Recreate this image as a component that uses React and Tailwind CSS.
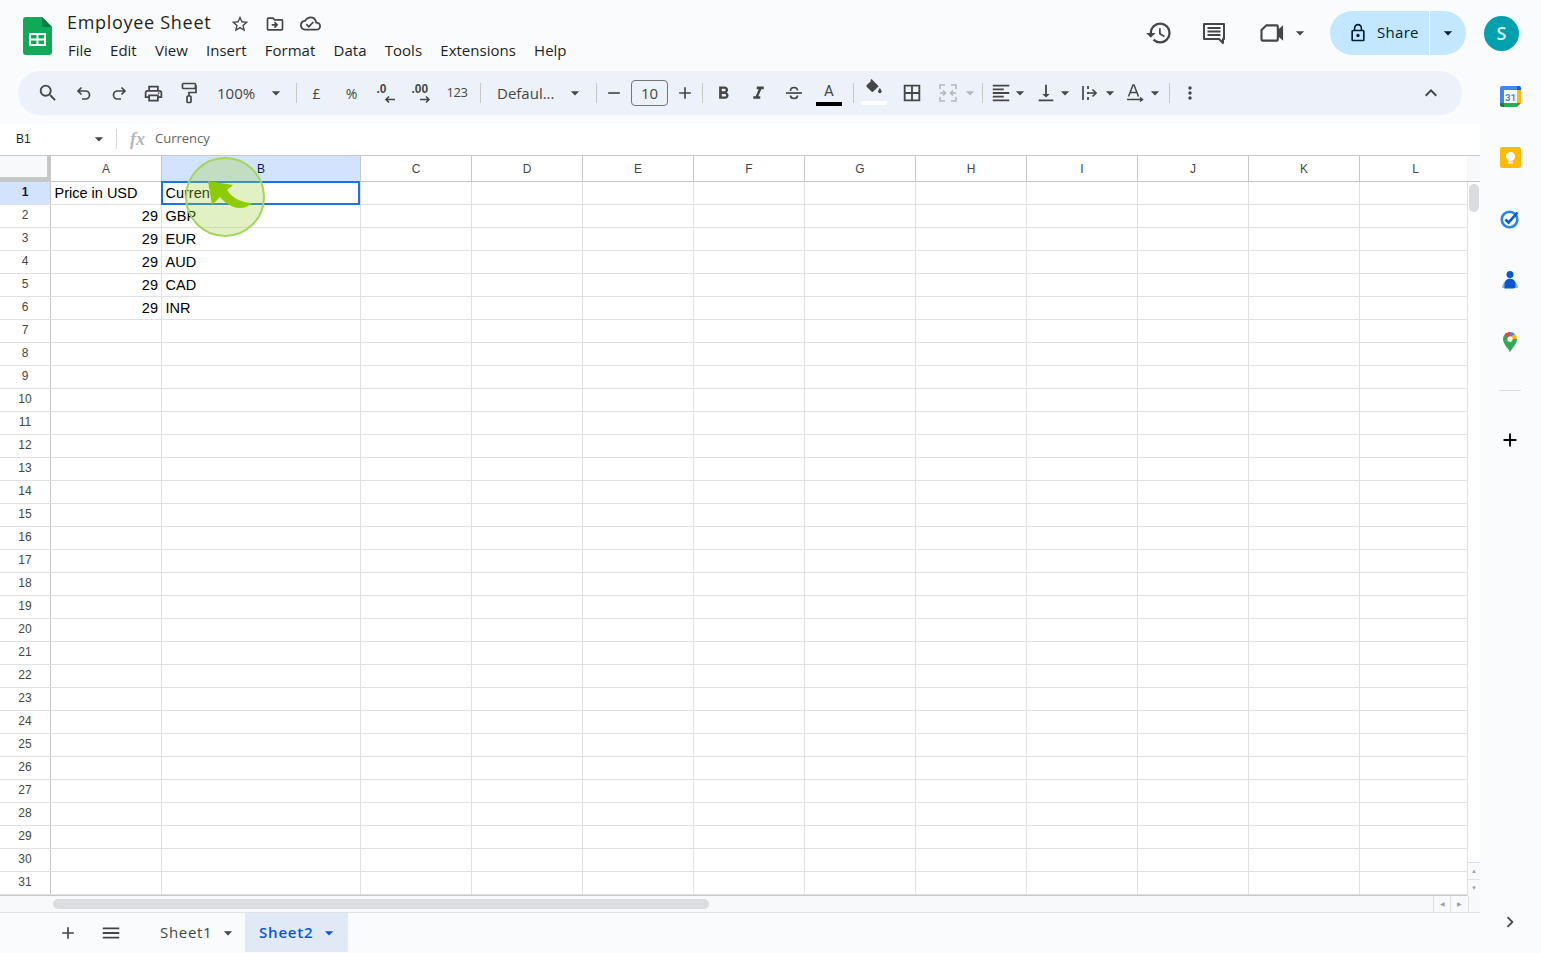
import React from 'react';
import {
  MdSearch, MdArrowDropDown, MdRemove, MdAdd,
  MdFormatBold, MdFormatItalic, MdBorderAll, MdFormatAlignLeft, MdVerticalAlignBottom,
  MdMoreVert, MdKeyboardArrowUp, MdOutlineStarBorder, MdOutlineDriveFileMove, MdOutlineCloudDone, MdHistory,
  MdLockOutline, MdMenu, MdChevronRight, MdOutlinePrint,
} from 'react-icons/md';

const columns = [
  { name: 'A', width: 'w-[111px]' },
  { name: 'B', width: 'w-[199px]' },
  { name: 'C', width: 'w-[111px]' },
  { name: 'D', width: 'w-[111px]' },
  { name: 'E', width: 'w-[111px]' },
  { name: 'F', width: 'w-[111px]' },
  { name: 'G', width: 'w-[111px]' },
  { name: 'H', width: 'w-[111px]' },
  { name: 'I', width: 'w-[111px]' },
  { name: 'J', width: 'w-[111px]' },
  { name: 'K', width: 'w-[111px]' },
  { name: 'L', width: 'w-[107px]' },
];

const rowData = {
  1: ['Price in USD', 'Curren'],
  2: ['29', 'GBP'],
  3: ['29', 'EUR'],
  4: ['29', 'AUD'],
  5: ['29', 'CAD'],
  6: ['29', 'INR'],
};

const rows = Array.from({ length: 31 }, (_, i) => i + 1);
const menus = ['File', 'Edit', 'View', 'Insert', 'Format', 'Data', 'Tools', 'Extensions', 'Help'];

const Divider = () => <div className="w-px h-5 bg-[#c7c7c7] shrink-0" />;
const Caret = ({ className = 'text-[#444746]' }) => <MdArrowDropDown className={`w-[20px] h-[20px] shrink-0 ${className}`} />;
const Slot = ({ className = 'w-[35px]', children }) => <div className={`flex items-center justify-center shrink-0 ${className}`}>{children}</div>;

const SheetsLogo = () => (
  <svg width="29" height="38" viewBox="0 0 29 38" className="shrink-0">
    <path d="M3 0h16l10 10v25a3 3 0 0 1-3 3H3a3 3 0 0 1-3-3V3a3 3 0 0 1 3-3z" fill="#0fa958" />
    <path d="M19 0l10 10h-8a2 2 0 0 1-2-2z" fill="#0a7a3f" />
    <path d="M6 16h17v13H6z M8 18v3.500h5.500V18z M15.500 18v3.500H21V18z M8 23.500V27h5.500v-3.500z M15.500 23.500V27H21v-3.500z" fill="#fff" fillRule="evenodd" />
  </svg>
);

const CommentIcon = () => (
  <svg width="24" height="24" viewBox="0 0 24 24" fill="none" stroke="#444746" strokeWidth="2">
    <path d="M2 3h20v15h-1v4l-4-4H2z" strokeLinejoin="round" />
    <path d="M5.500 7h13M5.500 10.500h13M5.500 14h13" strokeWidth="1.800" />
  </svg>
);

const VideoIcon = () => (
  <svg width="28" height="28" viewBox="0 0 24 24" fill="none" stroke="#444746" strokeWidth="1.800">
    <path d="M7 5.500h9a1 1 0 0 1 1 1v11a1 1 0 0 1-1 1H4a1 1 0 0 1-1-1V9.500z" strokeLinejoin="round" />
    <path d="M17 10l4-3.500v11L17 14z" fill="#444746" strokeWidth="1" />
  </svg>
);

const UndoIcon = () => (
  <svg width="20" height="20" viewBox="0 0 20 20" fill="none" stroke="#444746" strokeWidth="1.700">
    <path d="M7.500 4.500 4 8l3.500 3.500M4 8h7.500a4 4 0 0 1 0 8H8" />
  </svg>
);

const RedoIcon = () => (
  <svg width="20" height="20" viewBox="0 0 20 20" fill="none" stroke="#444746" strokeWidth="1.700">
    <path d="M12.500 4.500 16 8l-3.500 3.500M16 8H8.500a4 4 0 0 0 0 8H12" />
  </svg>
);

const PaintIcon = () => (
  <svg width="16" height="22" viewBox="0 0 16 22" fill="none" stroke="#444746" strokeWidth="1.700">
    <rect x="1.500" y="1.500" width="13" height="5" rx="1" />
    <path d="M14.500 4H15v6.500H8V14" />
    <rect x="6" y="14" width="4" height="6.500" rx="1" />
  </svg>
);

const StrikeIcon = () => (
  <svg width="20" height="20" viewBox="0 0 20 20" fill="none" stroke="#444746" strokeWidth="1.700">
    <path d="M2 10h16" />
    <path d="M6.500 8c0-2 1.500-3.500 3.500-3.500s3.500 1 3.500 3M13.500 12.500c0 2-1.500 3-3.500 3s-3.500-1-3.500-3" />
  </svg>
);

const DecimalLess = () => (
  <div className="relative w-[22px] h-[24px] text-[#444746] font-bold text-[12px] leading-none font-['Liberation_Sans',sans-serif]">
    <span className="absolute left-[1px] top-[2px]">.0</span>
    <svg className="absolute left-[8px] top-[14px]" width="12" height="9" viewBox="0 0 12 9" fill="none" stroke="#444746" strokeWidth="1.600"><path d="M11 4.500H2M5 1.500l-3 3 3 3" /></svg>
  </div>
);

const DecimalMore = () => (
  <div className="relative w-[22px] h-[24px] text-[#444746] font-bold text-[12px] leading-none font-['Liberation_Sans',sans-serif]">
    <span className="absolute left-[1px] top-[2px]">.00</span>
    <svg className="absolute left-[8px] top-[14px]" width="12" height="9" viewBox="0 0 12 9" fill="none" stroke="#444746" strokeWidth="1.600"><path d="M1 4.500h9M7 1.500l3 3-3 3" /></svg>
  </div>
);

const TextColor = () => (
  <div className="flex flex-col items-center w-[26px] h-[26px] mt-[1px]">
    <span className="text-[15px] leading-[20px] text-[#444746] font-['Roboto',sans-serif]">A</span>
    <div className="w-[26px] h-[4px] bg-black mt-[1px]" />
  </div>
);

const FillColor = () => (
  <div className="flex flex-col items-center w-[26px] h-[26px] -mt-[3px]">
    <svg width="18" height="18" viewBox="0 0 20 20" fill="#444746">
      <path d="M6 1l1.200-1 8 8-6 6a1.500 1.500 0 0 1-2 0L2 8.800a1.500 1.500 0 0 1 0-2L6.500 2.500z" />
      <path d="M16.500 10s2 2.500 2 3.800a2 2 0 0 1-4 0c0-1.300 2-3.800 2-3.800z" />
    </svg>
    <div className="w-[26px] h-[4px] bg-white mt-[4px]" />
  </div>
);

const MergeIcon = () => (
  <svg width="20" height="20" viewBox="0 0 20 20" fill="none" stroke="#b4b7bb" strokeWidth="1.600">
    <path d="M7 2H2v4M13 2h5v4M7 18H2v-4M13 18h5v-4M2 10h5M5 7.500 7.500 10 5 12.500M18 10h-5M15 7.500 12.500 10l2.500 2.500" />
  </svg>
);

const WrapIcon = () => (
  <svg width="20" height="20" viewBox="0 0 20 20" fill="none" stroke="#444746" strokeWidth="1.700">
    <path d="M3 3v14M8 3v3M8 9v2M8 14v3M7 10h9M12.500 6.500l3.500 3.500-3.500 3.500" />
  </svg>
);

const RotateIcon = () => (
  <svg width="22" height="22" viewBox="0 0 22 22" fill="none" stroke="#444746" strokeWidth="1.500">
    <path d="M3.500 14.500 8 3h1l4.500 11.500M5.200 10.500h6.600M2 17.500h15M15 15.500l2.500 2-2.500 2" />
  </svg>
);

const CalendarIcon = () => (
  <svg width="21" height="21" viewBox="0 0 21 21">
    <path d="M4 0h13v4H4z" fill="#4285f4" />
    <path d="M17 0h2a2 2 0 0 1 2 2v2h-4z" fill="#1a5fd0" />
    <path d="M17 4h4v13h-4z" fill="#fbbc04" />
    <path d="M4 17h13v4H4z" fill="#34a853" />
    <path d="M0 4h4v13H0z" fill="#4285f4" />
    <path d="M0 17h4v4H2a2 2 0 0 1-2-2z" fill="#188038" />
    <path d="M0 4V2a2 2 0 0 1 2-2h2v4z" fill="#4285f4" />
    <path d="M17 17h4l-4 4z" fill="#ea4335" />
    <path d="M4 4h13v13H4z" fill="#fff" />
    <text x="10.500" y="14.500" textAnchor="middle" fontSize="9.500" fontWeight="700" fill="#4285f4" fontFamily="Roboto, sans-serif">31</text>
  </svg>
);

const KeepIcon = () => (
  <svg width="21" height="22" viewBox="0 0 21 22">
    <rect width="21" height="21" rx="2" fill="#fbbc04" />
    <circle cx="10.500" cy="9.500" r="4.500" fill="#fff" />
    <rect x="8.300" y="14.500" width="4.400" height="2" fill="#fff" />
  </svg>
);

const TasksIcon = () => (
  <svg width="20" height="20" viewBox="0 0 20 20" fill="none">
    <circle cx="9.500" cy="10.500" r="7.800" stroke="#2684fc" strokeWidth="2.600" />
    <path d="M5.500 10.500l3 3 9-10" stroke="#0b57d0" strokeWidth="2.600" />
  </svg>
);

const ContactsIcon = () => (
  <svg width="18" height="20" viewBox="0 0 18 20">
    <circle cx="9" cy="4.500" r="3.500" fill="#0b57d0" />
    <path d="M1 18a8 8 0 0 1 16 0z" fill="#8ab4f8" />
    <path d="M3.500 18.500V14a5.500 5.500 0 0 1 11 0v2.500a2 2 0 0 1-2 2z" fill="#0b57d0" />
  </svg>
);

const MapsIcon = () => (
  <svg width="14" height="20" viewBox="0 0 14 20">
    <path d="M7 20C5 16 0 12 0 7a7 7 0 0 1 3-5.700L7 7z" fill="#34a853" />
    <path d="M2 2a7 7 0 0 1 5-2l1 4-3 3z" fill="#ea4335" />
    <path d="M7 0a7 7 0 0 1 5 2L9 6 6.500 4z" fill="#4285f4" />
    <path d="M12 2a7 7 0 0 1 2 5L4 10l3-5z" fill="#fbbc04" />
    <path d="M14 7c0 5-5 9-7 13-.500-2-1.500-4-3-6l6-7z" fill="#34a853" />
    <circle cx="7" cy="7" r="2.600" fill="#fff" />
  </svg>
);

const FxIcon = () => (
  <span className="text-[18px] leading-none italic font-bold text-[#b4b7bb] font-['Liberation_Serif',serif]">fx</span>
);

const Cell = ({ width, align, last, children }) => (
  <div className={`${width} h-full shrink-0 ${last ? '' : 'border-r border-[#e1e1e1]'} pl-[3.500px] pr-[3px] text-[14.500px] leading-[23px] text-black whitespace-nowrap overflow-hidden font-['Liberation_Sans',sans-serif] ${align}`}>
    {children}
  </div>
);

const App = () => {
  return (
    <div className="flex flex-col w-[1541px] h-[953px] overflow-hidden bg-[#f9fbfd] text-[#444746] font-['Open_Sans',sans-serif]">
      {/* title + menus */}
      <div className="flex items-start h-[71px] shrink-0">
        <div className="pl-[23px] pt-[17px]"><SheetsLogo /></div>
        <div className="pl-[15px] pt-[10px]">
          <div className="flex items-center h-[26px] gap-[15px]">
            <span className="text-[18px] tracking-[0.7px] leading-[26px] text-[#1f1f1f] mr-[4px] -mt-[2px]">Employee Sheet</span>
            <MdOutlineStarBorder className="w-[20px] h-[20px] mt-[1px]" />
            <MdOutlineDriveFileMove className="w-[20px] h-[20px] mt-[1px]" />
            <MdOutlineCloudDone className="w-[21px] h-[21px] mt-[1px]" />
          </div>
          <div className="flex gap-[18.300px] mt-[2px] ml-[1px] text-[15px] leading-[24px] text-[#1f1f1f]">
            {menus.map((m) => <span key={m}>{m}</span>)}
          </div>
        </div>
        <div className="ml-auto flex items-center pt-[11px] h-[55px] pr-[22px]">
          <MdHistory className="w-[28px] h-[28px] mr-[29px]" />
          <div className="mr-[32px]"><CommentIcon /></div>
          <VideoIcon />
          <Caret className="text-[#444746] ml-[4px] mr-[20px]" />
          <div className="flex items-center h-[44px] w-[136px] rounded-full bg-[#c2e7ff] text-[#001d35]">
            <div className="flex items-center flex-1 h-full pl-[18px] border-r border-white">
              <MdLockOutline className="w-[20px] h-[20px]" />
              <span className="ml-[9px] -mt-[2px] text-[15px] tracking-[0.3px]">Share</span>
            </div>
            <div className="w-[36px] flex justify-center"><Caret className="text-[#001d35]" /></div>
          </div>
          <div className="ml-[18px] h-[35px] w-[35px] rounded-full bg-[#00a0ad] text-[#e0f4f5] text-[18px] font-semibold leading-[35px] text-center">S</div>
        </div>
      </div>

      <div className="flex flex-1 min-h-0">
        <div className="flex flex-col w-[1480px] shrink-0">
          {/* toolbar */}
          <div className="flex items-center h-[44px] ml-[18px] mr-[18px] rounded-full bg-[#edf2fa] shrink-0 pl-[11px] pr-[19px]">
            <Slot className="w-[37px]"><MdSearch className="w-[22px] h-[22px]" /></Slot>
            <Slot><UndoIcon /></Slot>
            <Slot><RedoIcon /></Slot>
            <Slot><MdOutlinePrint className="w-[21px] h-[21px]" /></Slot>
            <Slot><PaintIcon /></Slot>
            <div className="flex items-center w-[80px] pl-[11px] shrink-0">
              <span className="text-[15px] w-[49px] mt-[1px]">100%</span>
              <Caret />
            </div>
            <div className="ml-[10px] mr-[2px]"><Divider /></div>
            <Slot><span className="text-[14px]">£</span></Slot>
            <Slot><span className="text-[14px]">%</span></Slot>
            <Slot><DecimalLess /></Slot>
            <Slot><DecimalMore /></Slot>
            <Slot className="w-[36px]"><span className="text-[13px] tracking-[-0.5px]">123</span></Slot>
            <div className="ml-[5px]"><Divider /></div>
            <span className="text-[15px] ml-[16px] w-[58px] shrink-0">Defaul...</span>
            <Caret className="ml-[10px] text-[#444746]" />
            <div className="ml-[11px]"><Divider /></div>
            <Slot className="w-[34px]"><MdRemove className="w-[20px] h-[20px]" /></Slot>
            <div className="w-[37px] h-[26px] rounded-[4px] border border-[#747775] text-[15px] leading-[25px] text-center shrink-0">10</div>
            <Slot className="w-[34px]"><MdAdd className="w-[20px] h-[20px]" /></Slot>
            <Divider />
            <Slot className="w-[35px] ml-[3px]"><MdFormatBold className="w-[21px] h-[21px]" /></Slot>
            <Slot><MdFormatItalic className="w-[21px] h-[21px]" /></Slot>
            <Slot><StrikeIcon /></Slot>
            <Slot className="w-[36px]"><TextColor /></Slot>
            <div className="ml-[6px]"><Divider /></div>
            <Slot className="w-[35px] ml-[2px]"><FillColor /></Slot>
            <Slot className="w-[35px] ml-[3px]"><MdBorderAll className="w-[22px] h-[22px]" /></Slot>
            <Slot className="w-[36px] ml-[1px]"><MergeIcon /></Slot>
            <Caret className="text-[#b4b7bb] -ml-[6px]" />
            <div className="ml-[2px]"><Divider /></div>
            <MdFormatAlignLeft className="w-[22px] h-[22px] ml-[7px] shrink-0" />
            <Caret className="-ml-[2px] text-[#444746]" />
            <MdVerticalAlignBottom className="w-[22px] h-[22px] ml-[5px] shrink-0" />
            <Caret className="-ml-[2px] text-[#444746]" />
            <div className="ml-[5px]"><WrapIcon /></div>
            <Caret />
            <div className="ml-[5px]"><RotateIcon /></div>
            <Caret className="-ml-[2px] text-[#444746]" />
            <div className="ml-[4px]"><Divider /></div>
            <MdMoreVert className="w-[20px] h-[20px] ml-[10px] shrink-0" />
            <MdKeyboardArrowUp className="w-[24px] h-[24px] ml-auto" />
          </div>

          {/* sheet area */}
          <div className="mt-[9px] flex flex-col bg-white">
            {/* formula bar */}
            <div className="flex items-center h-[32px] border-b border-[#c7c7c7] shrink-0 pb-[1px]">
              <span className="pl-[16px] w-[89px] text-[12px] text-[#1f1f1f] font-['Liberation_Sans',sans-serif]">B1</span>
              <Caret />
              <div className="w-px h-[20px] bg-[#dadce0] ml-[7px] mr-[13px]" />
              <FxIcon />
              <span className="ml-[10px] text-[13px] text-[#5f6368]">Currency</span>
            </div>

            {/* column headers */}
            <div className="flex h-[26px] shrink-0 border-b border-[#c7c7c7]">
              <div className="w-[51px] h-full shrink-0 bg-[#f8f9fa] border-r-[4px] border-b-[4px] border-[#c7c7c7]" />
              {columns.map((c) => (
                <div
                  key={c.name}
                  className={`${c.width} shrink-0 text-center text-[12px] leading-[27px] font-['Liberation_Sans',sans-serif] ${c.name === 'L' ? 'pl-[4px]' : 'border-r border-[#c7c7c7]'} ${c.name === 'B' ? 'bg-[#d3e3fd] text-[#041e49]' : 'text-[#444746]'}`}
                >
                  {c.name}
                </div>
              ))}
              <div className="flex-1 bg-[#f8f9fa]" />
            </div>

            {/* rows */}
            <div className="relative flex">
              <div className="flex flex-col w-[1467px] shrink-0">
                {rows.map((r) => (
                  <div key={r} className="flex h-[23px] shrink-0 border-b border-[#e1e1e1]">
                    <div className={`w-[51px] h-full shrink-0 text-center text-[12px] leading-[21px] border-r border-[#c7c7c7] font-['Liberation_Sans',sans-serif] ${r === 1 ? 'bg-[#d3e3fd] text-[#041e49] font-bold' : 'text-[#444746]'}`}>
                      {r}
                    </div>
                    {columns.map((c, i) => {
                      const value = rowData[r]?.[i];
                      return (
                        <Cell key={c.name} width={c.width} last={c.name === 'L'} align={value === '29' ? 'text-right' : 'text-left'}>
                          {value}
                        </Cell>
                      );
                    })}
                  </div>
                ))}
                <div className="h-[1px] bg-[#c7c7c7]" />
              </div>

              {/* vertical scrollbar */}
              <div className="flex-1 flex flex-col border-l border-[#e1e1e1] bg-white relative">
                <div className="mt-[2px] mx-[1px] h-[28px] rounded-full bg-[#dadce0]" />
                <div className="mt-auto h-[17px] border-t border-[#e1e1e1] bg-[#f8f9fa] flex items-center justify-center text-[6px] text-[#9aa0a6]">▲</div>
                <div className="h-[17px] border-t border-[#e1e1e1] bg-[#f8f9fa] flex items-center justify-center text-[6px] text-[#9aa0a6]">▼</div>
              </div>

              {/* selected cell */}
              <div className="absolute left-[161px] -top-[1px] w-[199px] h-[24px] border-2 border-[#1a73e8]" />

              {/* cursor highlight */}
              <div className="absolute left-[185px] -top-[25px] w-[80px] h-[80px] rounded-full border-2 border-[#a4d65e] bg-[rgba(156,208,60,0.3)]" />
              <svg className="absolute left-[207px] -top-[1px]" width="48" height="30" viewBox="0 0 48 30">
                <path d="M1 0L26 4L20 9C25 17 33 21 45 22C41 26 37 27 33 27C25 27 18 22 13 16L5 24Z" fill="#8ccc00" />
              </svg>
            </div>

            {/* horizontal scrollbar */}
            <div className="flex h-[17px] shrink-0 bg-[#f8f9fa] border-b border-[#e1e1e1]">
              <div className="w-[51px] shrink-0" />
              <div className="w-[656px] h-[10px] mt-[3px] ml-[2px] rounded-full bg-[#dadce0]" />
              <div className="ml-auto flex h-full">
                <div className="w-[17px] border-l border-[#e1e1e1] text-[6px] leading-[17px] text-center text-[#9aa0a6]">◀</div>
                <div className="w-[17px] border-l border-[#e1e1e1] text-[6px] leading-[17px] text-center text-[#9aa0a6]">▶</div>
                <div className="w-[12px] border-l border-[#e1e1e1] ml-[1px]" />
              </div>
            </div>
          </div>

          {/* sheet tabs */}
          <div className="flex items-stretch flex-1 bg-[#f9fbfd] pb-[1px]">
            <MdAdd className="w-[20px] h-[20px] ml-[58px] self-center" />
            <MdMenu className="w-[22px] h-[22px] ml-[22px] self-center" />
            <div className="flex items-center ml-[38px] w-[85px] text-[15px] tracking-[0.7px] text-[#444746]">
              <span>Sheet1</span>
              <Caret className="ml-[6px] text-[#444746]" />
            </div>
            <div className="flex items-center w-[103px] pl-[14px] bg-[#e1e9f7] text-[15px] tracking-[0.8px] text-[#0b57d0] font-semibold">
              <span>Sheet2</span>
              <Caret className="ml-[6px] text-[#0b57d0]" />
            </div>
          </div>
        </div>

        {/* side panel */}
        <div className="flex flex-col items-center flex-1 pt-[15px] pr-[1px]">
          <CalendarIcon />
          <div className="mt-[40px]"><KeepIcon /></div>
          <div className="mt-[40px]"><TasksIcon /></div>
          <div className="mt-[41px]"><ContactsIcon /></div>
          <div className="mt-[42px]"><MapsIcon /></div>
          <div className="w-[22px] h-px bg-[#dadce0] mt-[38px]" />
          <MdAdd className="w-[22px] h-[22px] mt-[38px] text-black" />
          <MdChevronRight className="w-[22px] h-[22px] text-[#444746] mt-auto mb-[20px]" />
        </div>
      </div>
    </div>
  );
};

export default App;
